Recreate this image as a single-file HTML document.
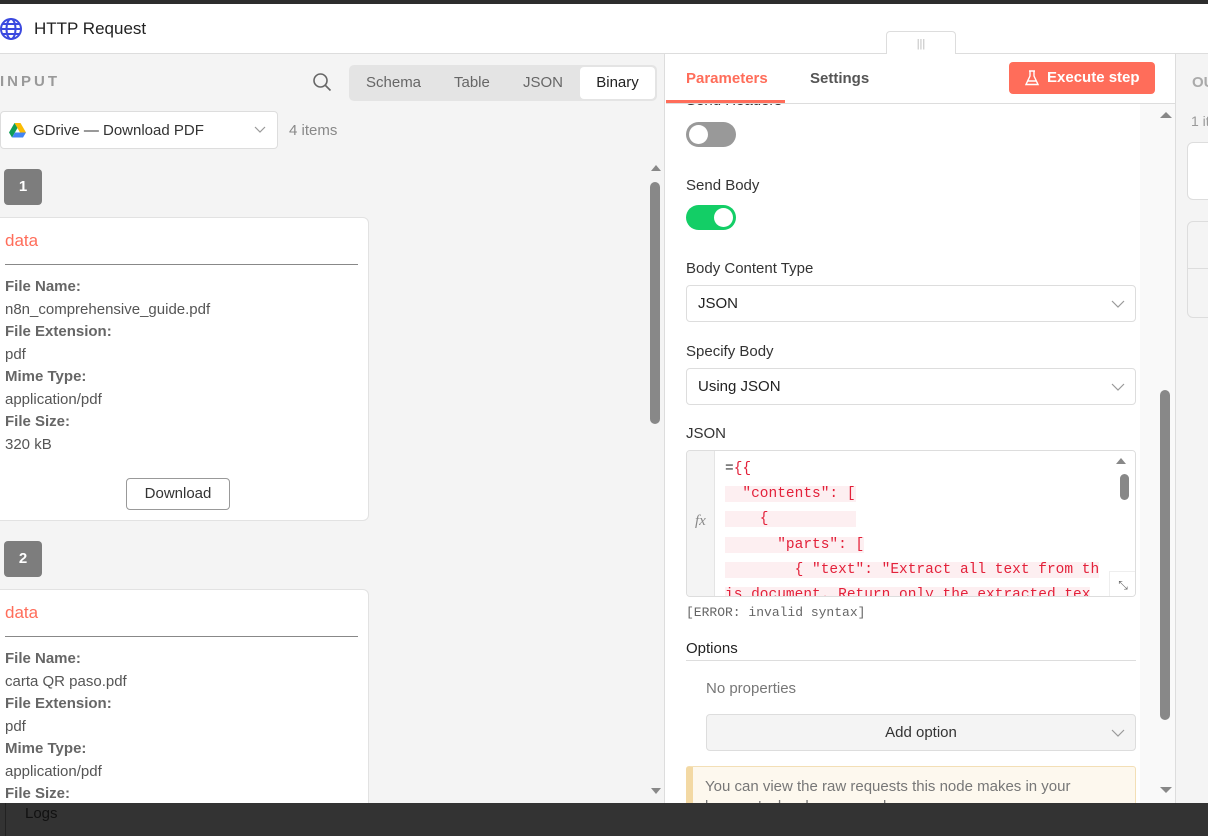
<!DOCTYPE html>
<html><head><meta charset="utf-8"><style>
*{box-sizing:border-box;margin:0;padding:0}
body{width:1208px;height:836px;overflow:hidden;font-family:"Liberation Sans",sans-serif;background:#fff;position:relative;color:#333}
.a{position:absolute}
.mono{font-family:"Liberation Mono",monospace}
b{font-weight:600;color:#666}
</style></head><body>
<div class="a" style="left:0;top:0;width:1208px;height:4px;background:#2d2d2d"></div>
<div class="a" style="left:0;top:53px;width:1208px;height:1px;background:#ddd"></div>
<svg class="a" style="left:0;top:17px" width="24" height="24" viewBox="0 0 24 24" fill="none" stroke="#3b49df" stroke-width="2"><circle cx="11" cy="12" r="10"/><ellipse cx="11" cy="12" rx="4.5" ry="10"/><path d="M1 12h20M3 7h16M3 17h16"/></svg>
<div class="a" style="left:34px;top:19px;font-size:17px;color:#222">HTTP Request</div>
<div class="a" style="left:886px;top:31px;width:70px;height:24px;background:#fff;border:1px solid #ddd;border-bottom:none;border-radius:4px 4px 0 0;text-align:center;color:#bbb;font-size:11px;line-height:24px">|||</div>

<div class="a" style="left:0;top:54px;width:665px;height:750px;background:#f4f4f4;border-right:1px solid #ddd;overflow:hidden">
 <div class="a" style="left:0;top:19px;font-size:15px;letter-spacing:3px;color:#999;font-weight:600">INPUT</div>
 <svg class="a" style="left:312px;top:18px" width="20" height="20" viewBox="0 0 20 20" fill="none" stroke="#666" stroke-width="1.6"><circle cx="8.5" cy="8.5" r="6.5"/><path d="M13.5 13.5l5 5"/></svg>
 <div class="a" style="left:349px;top:11px;width:308px;height:36px;background:#e4e4e4;border-radius:5px;font-size:15px;color:#666">
  <span class="a" style="left:17px;top:9px">Schema</span><span class="a" style="left:105px;top:9px">Table</span><span class="a" style="left:174px;top:9px">JSON</span>
  <div class="a" style="left:231px;top:2px;width:75px;height:32px;background:#fff;border-radius:4px;color:#222;text-align:center;line-height:32px">Binary</div>
 </div>
 <div class="a" style="left:0;top:57px;width:278px;height:38px;background:#fff;border:1px solid #ddd;border-radius:4px;font-size:15px;color:#333">
  <svg class="a" style="left:8px;top:11px" width="17" height="15" viewBox="0 0 17 15"><path d="M5.5 0h6l5.5 9.5h-6z" fill="#fbbc04"/><path d="M5.5 0L0 9.5l3 5L8.5 5z" fill="#0f9d58"/><path d="M3 14.5h11l3-5H6z" fill="#4285f4"/></svg>
  <span class="a" style="left:32px;top:10px">GDrive — Download PDF</span>
  <svg class="a" style="left:253px;top:14px" width="12" height="8" viewBox="0 0 12 8" fill="none" stroke="#999" stroke-width="1.2"><path d="M1 1l5 5 5-5"/></svg>
 </div>
 <div class="a" style="left:289px;top:68px;font-size:15px;color:#888">4 items</div>
 <div class="a" style="left:4px;top:115px;width:38px;height:36px;background:#7d7d7d;border-radius:4px;color:#fff;font-weight:bold;font-size:15px;text-align:center;line-height:36px">1</div>
 <div class="a" style="left:-6px;top:163px;width:375px;height:304px;background:#fff;border:1px solid #e2e2e2;border-radius:6px"></div>
 <div class="a" style="left:5px;top:177px;font-size:17px;color:#ff6d5a">data</div>
 <div class="a" style="left:5px;top:210px;width:353px;height:1px;background:#888"></div>
 <div class="a" style="left:5px;top:222px;font-size:15px;line-height:22.5px;color:#555"><b>File Name:</b><br>n8n_comprehensive_guide.pdf<br><b>File Extension:</b><br>pdf<br><b>Mime Type:</b><br>application/pdf<br><b>File Size:</b><br>320 kB</div>
 <div class="a" style="left:126px;top:424px;width:104px;height:32px;border:1px solid #999;border-radius:4px;background:#fff;font-size:15px;text-align:center;line-height:30px;color:#333">Download</div>
 <div class="a" style="left:4px;top:487px;width:38px;height:36px;background:#7d7d7d;border-radius:4px;color:#fff;font-weight:bold;font-size:15px;text-align:center;line-height:36px">2</div>
 <div class="a" style="left:-6px;top:535px;width:375px;height:300px;background:#fff;border:1px solid #e2e2e2;border-radius:6px"></div>
 <div class="a" style="left:5px;top:549px;font-size:17px;color:#ff6d5a">data</div>
 <div class="a" style="left:5px;top:582px;width:353px;height:1px;background:#888"></div>
 <div class="a" style="left:5px;top:594px;font-size:15px;line-height:22.5px;color:#555"><b>File Name:</b><br>carta QR paso.pdf<br><b>File Extension:</b><br>pdf<br><b>Mime Type:</b><br>application/pdf<br><b>File Size:</b></div>
 <div class="a" style="left:651px;top:111px;width:0;height:0;border:5px solid transparent;border-bottom:6px solid #888;border-top:none"></div>
 <div class="a" style="left:650px;top:128px;width:10px;height:242px;background:#888;border-radius:5px"></div>
 <div class="a" style="left:651px;top:734px;width:0;height:0;border:5px solid transparent;border-top:6px solid #888;border-bottom:none"></div>
</div>

<div class="a" style="left:666px;top:54px;width:509px;height:750px;background:#fff;overflow:hidden">
 <div class="a" style="left:20px;top:16px;font-size:15px;font-weight:bold;color:#ff6d5a">Parameters</div>
 <div class="a" style="left:0;top:46px;width:119px;height:3px;background:#ff6d5a"></div>
 <div class="a" style="left:144px;top:16px;font-size:15px;font-weight:bold;color:#555">Settings</div>
 <div class="a" style="left:343px;top:8px;width:146px;height:32px;background:#ff6d5a;border-radius:4px;color:#fff;font-size:15px;font-weight:bold;line-height:32px">
  <svg class="a" style="left:16px;top:8px" width="14" height="16" viewBox="0 0 14 16" fill="none" stroke="#fff" stroke-width="1.4"><path d="M4 1h6M5 1v5L1 14.5h12L9 6V1M3 11h8"/></svg>
  <span class="a" style="left:38px;top:0">Execute step</span></div>
 <div class="a" style="left:0;top:49px;width:509px;height:1px;background:#ddd"></div>
 <div class="a" style="left:0;top:50px;width:509px;height:700px;overflow:hidden">
  <div class="a" style="left:20px;top:-12px;font-size:15px;color:#333">Send Headers</div>
  <div class="a" style="left:20px;top:18px;width:50px;height:25px;background:#999;border-radius:13px"><div class="a" style="left:3px;top:3px;width:19px;height:19px;background:#fff;border-radius:50%"></div></div>
  <div class="a" style="left:20px;top:73px;font-size:15px">Send Body</div>
  <div class="a" style="left:20px;top:101px;width:50px;height:25px;background:#13ce66;border-radius:13px"><div class="a" style="left:28px;top:3px;width:19px;height:19px;background:#fff;border-radius:50%"></div></div>
  <div class="a" style="left:20px;top:156px;font-size:15px">Body Content Type</div>
  <div class="a" style="left:20px;top:181px;width:450px;height:37px;border:1px solid #ddd;border-radius:4px;font-size:15px;color:#222"><span class="a" style="left:11px;top:9px">JSON</span><svg class="a" style="left:424px;top:14px" width="14" height="8" fill="none" stroke="#999" stroke-width="1.2"><path d="M1 1l6 6 6-6"/></svg></div>
  <div class="a" style="left:20px;top:239px;font-size:15px">Specify Body</div>
  <div class="a" style="left:20px;top:264px;width:450px;height:37px;border:1px solid #ddd;border-radius:4px;font-size:15px;color:#222"><span class="a" style="left:11px;top:9px">Using JSON</span><svg class="a" style="left:424px;top:14px" width="14" height="8" fill="none" stroke="#999" stroke-width="1.2"><path d="M1 1l6 6 6-6"/></svg></div>
  <div class="a" style="left:20px;top:321px;font-size:15px">JSON</div>
  <div class="a" style="left:20px;top:346px;width:450px;height:147px;border:1px solid #ddd;border-radius:4px;overflow:hidden">
   <div class="a" style="left:0;top:0;width:28px;height:147px;background:#f4f4f4;border-right:1px solid #e4e4e4"></div>
   <div class="a" style="left:8px;top:62px;font-family:'Liberation Serif',serif;font-style:italic;color:#888;font-size:15px">fx</div>
   <div class="a mono" style="left:38px;top:6px;font-size:14.5px;line-height:25.2px;color:#e3213a;white-space:pre"><span style="color:#333">=</span>{{
<span style="background:#fdeff1">  "contents": [</span>
<span style="background:#fdeff1">    {          </span>
<span style="background:#fdeff1">      "parts": [</span>
<span style="background:#fdeff1">        { "text": "Extract all text from th</span>
<span style="background:#fdeff1">is document. Return only the extracted tex</span></div>
   <div class="a" style="left:418px;top:0;width:31px;height:146px;background:#fff"></div>
   <div class="a" style="left:429px;top:7px;border:5px solid transparent;border-bottom:6px solid #888;border-top:none"></div>
   <div class="a" style="left:433px;top:23px;width:9px;height:26px;background:#888;border-radius:5px"></div>
   <div class="a" style="left:422px;top:120px;width:27px;height:27px;border-left:1px solid #eee;border-top:1px solid #eee;color:#666;font-size:12px;text-align:center;line-height:26px">⤡</div>
  </div>
  <div class="a mono" style="left:20px;top:501px;font-size:13px;color:#666">[ERROR: invalid syntax]</div>
  <div class="a" style="left:20px;top:536px;font-size:15px;color:#222">Options</div>
  <div class="a" style="left:20px;top:556px;width:450px;height:1px;background:#ddd"></div>
  <div class="a" style="left:40px;top:576px;font-size:15px;color:#777">No properties</div>
  <div class="a" style="left:40px;top:610px;width:430px;height:37px;background:#f4f4f4;border:1px solid #ddd;border-radius:4px;font-size:15px;text-align:center;line-height:35px;color:#333">Add option<svg class="a" style="left:404px;top:14px" width="14" height="8" fill="none" stroke="#999" stroke-width="1.2"><path d="M1 1l6 6 6-6"/></svg></div>
  <div class="a" style="left:20px;top:662px;width:450px;height:60px;background:#fdf8ee;border:1px solid #f3dfb6;border-left:7px solid #f3d9a4;border-radius:3px;font-size:15px;color:#777;padding:10px 12px;line-height:20px">You can view the raw requests this node makes in your browser's developer console</div>
 </div>
 <div class="a" style="left:474px;top:50px;width:35px;height:700px;background:#f9f9f9"></div>
 <div class="a" style="left:494px;top:58px;border:6px solid transparent;border-bottom:6px solid #888;border-top:none"></div>
 <div class="a" style="left:494px;top:336px;width:10px;height:330px;background:#888;border-radius:5px"></div>
 <div class="a" style="left:494px;top:733px;border:6px solid transparent;border-top:6px solid #888;border-bottom:none"></div>
</div>

<div class="a" style="left:1175px;top:54px;width:33px;height:750px;background:#f4f4f4;border-left:1px solid #ddd;overflow:hidden;white-space:nowrap">
 <div class="a" style="left:16px;top:20px;font-size:15px;color:#aaa;font-weight:bold">OU</div>
 <div class="a" style="left:15px;top:59px;font-size:14px;color:#999">1 it</div>
 <div class="a" style="left:11px;top:88px;width:40px;height:58px;background:#fff;border:1px solid #ddd;border-radius:6px"></div>
 <div class="a" style="left:11px;top:167px;width:40px;height:97px;border:1px solid #ddd;border-radius:6px"></div>
 <div class="a" style="left:11px;top:214px;width:30px;height:1px;background:#ddd"></div>
</div>

<div class="a" style="left:0;top:803px;width:1208px;height:33px;background:#333"></div>
<div class="a" style="left:5px;top:803px;width:1px;height:33px;background:#222"></div>
<div class="a" style="left:25px;top:805px;font-size:15px;color:#111">Logs</div>
</body></html>
